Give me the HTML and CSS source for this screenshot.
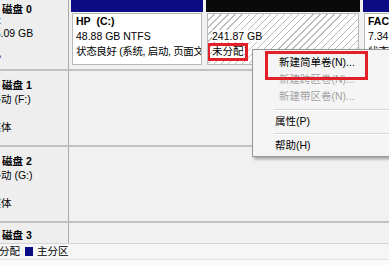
FILE: index.html
```html
<!DOCTYPE html>
<html lang="zh-CN">
<head>
<meta charset="utf-8">
<title>磁盘管理</title>
<link rel="stylesheet" href="styles.css">
</head>
<body>
<div class="window">
  <div class="disk d0">
    <div class="label">
      <div class="lines">
        <div class="title">磁盘 0</div>
        <div>基本</div>
        <div class="cap">465.09 GB</div>
        <div class="gap">联机</div>
      </div>
    </div>
    <div class="area">
      <div class="parts">
        <div class="part primary c">
          <div class="bar"></div>
          <div class="body">
            <div class="b">HP&nbsp; (C:)</div>
            <div>48.88 GB NTFS</div>
            <div class="status-line">状态良好 (系统, 启动, 页面文件, 活动, 故障转储, 主分区)</div>
          </div>
        </div>
        <div class="part free">
          <div class="bar"></div>
          <div class="body hatch">
            <div>&nbsp;</div>
            <div><span class="bg">241.87 GB</span></div>
            <div><span class="bg mark">未分配</span></div>
          </div>
        </div>
        <div class="part primary fact">
          <div class="bar"></div>
          <div class="body">
            <div class="b">FACTORY_IMAGE (D:)</div>
            <div>7.34 GB NTFS</div>
            <div>状态良好 (主分区)</div>
          </div>
        </div>
      </div>
    </div>
  </div>

  <div class="disk d1">
    <div class="label">
      <div class="lines">
        <div class="title">磁盘 1</div>
        <div>可移动 (F:)</div>
        <div class="blank"></div>
        <div>无媒体</div>
      </div>
    </div>
    <div class="area"></div>
  </div>

  <div class="disk d2">
    <div class="label">
      <div class="lines">
        <div class="title">磁盘 2</div>
        <div>可移动 (G:)</div>
        <div class="blank"></div>
        <div>无媒体</div>
      </div>
    </div>
    <div class="area"></div>
  </div>

  <div class="disk d3">
    <div class="label">
      <div class="lines">
        <div class="title">磁盘 3</div>
        <div>可移动 (H:)</div>
      </div>
    </div>
    <div class="area"></div>
  </div>

  <div class="legend">
    <div class="legend-in">
      <span class="sw black"></span><span>未分配</span>
      <span class="sw blue"></span><span>主分区</span>
    </div>
  </div>
  <div class="status"></div>

  <div class="menu">
    <div class="item hot"><span>新建简单卷(N)...</span></div>
    <div class="item off">新建跨区卷(N)...</div>
    <div class="item off">新建带区卷(N)...</div>
    <div class="sep s1"></div>
    <div class="item alt">属性(P)</div>
    <div class="sep s2"></div>
    <div class="item alt">帮助(H)</div>
  </div>
</div>
</body>
</html>
```

FILE: styles.css
```css
* { box-sizing: border-box; }
html, body { margin: 0; padding: 0; }
body {
  font-family: "Liberation Sans", "Noto Sans CJK SC", sans-serif;
  font-size: 10.5px;
  color: #000;
  background: #f0f0f0;
}
.window {
  position: relative;
  width: 389px;
  height: 265px;
  overflow: hidden;
  display: flex;
  flex-direction: column;
  background: #efefef;
}
.disk {
  display: flex;
  flex: none;
  border-bottom: 2px solid #c2c2c2;
}
.d0 { height: 71px; }
.d1, .d2 { height: 76px; }
.d3 { height: 20px; border-bottom: 0; overflow: hidden; }

.label {
  width: 69px;
  flex: none;
  border-right: 1px solid #aaaaaa;
  overflow: hidden;
  white-space: nowrap;
  background: #eeeeee;
}
.lines {
  margin-left: -20px;
  padding-top: 7px;
  line-height: 14px;
}
.d0 .lines { padding-top: 3px; line-height: 12px; }
.d0 .gap { margin-top: 8px; }
.d0 .cap { padding-left: 3px; }
.d3 .lines { padding-top: 5px; }
.title { padding-left: 22px; font-weight: bold; }
.blank { height: 14px; }

.area { flex: 1; background: #f1f1f1; overflow: hidden; }
.parts { display: flex; gap: 3px; padding-left: 2px; }
.part { flex: none; height: 65px; display: flex; flex-direction: column; }
.c { width: 132px; }
.free { width: 154px; }
.fact { width: 70px; }
.bar { height: 12px; flex: none; }
.primary .bar { background: #0b0b84; }
.free .bar { background: #0a0a0a; }
.body {
  flex: 1;
  margin: 1px 1px 0;
  border: 1px solid #b9b9b9;
  background: #ffffff;
  padding-left: 3px;
  line-height: 15px;
  overflow: hidden;
  white-space: nowrap;
}
.free .body { padding-left: 4px; }
.status-line { letter-spacing: -0.35px; }
.b { font-weight: bold; }
.hatch {
  background: repeating-linear-gradient(135deg, #ffffff 0 4px, #bcbcbc 4px 5px);
}
.bg { background: #ffffff; }
.mark { position: relative; display: inline-block; line-height: 15px; }
.mark::after {
  content: "";
  position: absolute;
  top: -1px;
  bottom: -2px;
  left: -5px;
  right: -4px;
  border: 3px solid #e3202a;
}

.legend {
  flex: none;
  height: 16px;
  border-top: 1px solid #d4d4d4;
  background: #f6f6f6;
  overflow: hidden;
  white-space: nowrap;
}
.legend-in {
  display: flex;
  align-items: center;
  margin-left: -23.5px;
  height: 15px;
  line-height: 15px;
}
.sw { width: 8px; height: 9px; flex: none; margin-right: 4px; }
.sw.black { background: #000000; }
.sw.blue { background: #0b0b84; margin-left: 5px; }
.status { flex: 1; background: #fafafa; border-top: 1px solid #e2e2e2; }

.menu {
  position: absolute;
  left: 252px;
  top: 49px;
  width: 160px;
  background: #f5f5f5;
  border: 1px solid #979797;
  box-shadow: 2px 2px 3px rgba(0, 0, 0, 0.35);
  padding: 4px 0 2px;
  white-space: nowrap;
}
.item {
  height: 17px;
  line-height: 17px;
  padding-left: 26px;
}
.item.alt { padding-left: 22px; }
.item.off { color: #a3a3a3; }
.item.hot { position: relative; }
.item.hot::after {
  content: "";
  position: absolute;
  left: 12px;
  top: -3px;
  width: 97px;
  height: 23px;
  border: 3px solid #e3202a;
}
.sep {
  margin-left: 21px;
  border-top: 1px solid #d5d5d5;
  border-bottom: 1px solid #ffffff;
}
.s1 { margin-top: 4px; margin-bottom: 2px; }
.s2 { margin-top: 3px; margin-bottom: 2px; }
```
